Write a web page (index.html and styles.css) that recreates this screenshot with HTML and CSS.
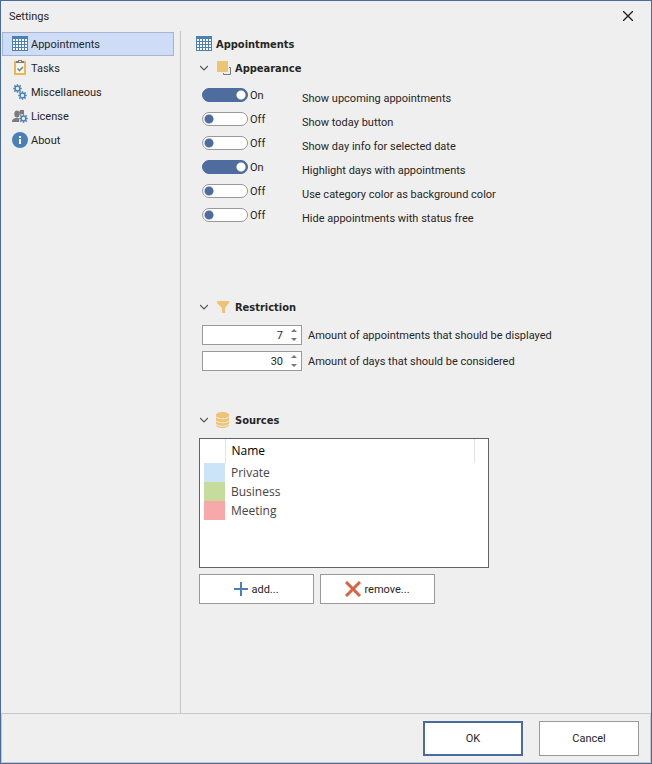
FILE: index.html
```html
<!DOCTYPE html>
<html lang="en">
<head>
<meta charset="utf-8">
<title>Settings</title>
<link rel="stylesheet" href="styles.css">
</head>
<body>
<svg class="defs" aria-hidden="true">
  <symbol id="calendar" viewBox="0 0 16 16">
    <path fill="#4a80b8" d="M0 0h16v15H0z"/>
    <path fill="#fff" d="M1 3h2v2H1zM4 3h2v2H4zM7 3h2v2H7zM10 3h2v2h-2zM13 3h2v2h-2zM1 6h2v2H1zM4 6h2v2H4zM7 6h2v2H7zM10 6h2v2h-2zM13 6h2v2h-2zM1 9h2v2H1zM4 9h2v2H4zM7 9h2v2H7zM10 9h2v2h-2zM13 9h2v2h-2zM1 12h2v2H1zM4 12h2v2H4zM7 12h2v2H7zM10 12h2v2h-2zM13 12h2v2h-2z"/>
  </symbol>
  <symbol id="gear" viewBox="0 0 10 10">
    <circle cx="5" cy="5" r="2.6" fill="none" stroke="#4a80b8" stroke-width="1.5"/>
    <path stroke="#4a80b8" stroke-width="1.7" d="M5 .3v2M5 7.700v2M.3 5h2M7.700 5h2M1.500 1.500l1.500 1.500M7 7l1.500 1.500M1.500 8.500L3 7M7 3l1.500-1.500"/>
  </symbol>
  <symbol id="chevron" viewBox="0 0 8 8">
    <path fill="none" stroke="#555" stroke-width="1.2" d="M0 2l4 4 4-4"/>
  </symbol>
</svg>
<div class="window">
  <header class="titlebar">
    <h1>Settings</h1>
    <button class="close" type="button" aria-label="Close"><svg width="10" height="10" viewBox="0 0 10 10"><path stroke="#1c1c1c" stroke-width="1.3" d="M0 0l10 10M10 0L0 10"/></svg></button>
  </header>
  <div class="body">
    <nav class="sidebar">
      <a class="item selected" href="#appointments" aria-current="page"><svg class="icon"><use href="#calendar"/></svg>Appointments</a>
      <a class="item" href="#tasks"><svg class="icon" viewBox="0 0 16 16"><path fill="#f4f4f4" stroke="#edb452" stroke-width="2" d="M3 2h10v12H3z"/><path fill="#efefef" d="M4 0h8v4H4z"/><path fill="#7c7c7c" d="M4 1h2V0h4v1h2v2H4zM7 1v1h2V1z"/><path fill="none" stroke="#5d9c89" stroke-width="1.600" d="M5.500 8.500l2 2L11 7"/></svg>Tasks</a>
      <a class="item" href="#miscellaneous"><svg class="icon"><use href="#gear" x="1" y="0" width="9" height="9"/><use href="#gear" x="6" y="7" width="9" height="9"/></svg>Miscellaneous</a>
      <a class="item" href="#license"><svg class="icon" viewBox="0 0 16 16"><circle cx="9.500" cy="4.500" r="2.500" fill="#9a9a9a"/><ellipse cx="5" cy="6" rx="2.700" ry="3.600" fill="#7c7c7c"/><path fill="#7c7c7c" d="M0 14c0-3 2-4 5-4 1 0 2 0 3 1l-1 3zM8 2h4v4H8z"/><circle cx="11.500" cy="10.500" r="4.500" fill="#efefef"/><use href="#gear" x="7" y="6" width="9" height="9"/></svg>License</a>
      <a class="item" href="#about"><svg class="icon" viewBox="0 0 16 16"><circle cx="8" cy="8" r="8" fill="#4a80b8"/><path fill="#fff" d="M7 4h2v2H7zM7 7h2v5H7z"/></svg>About</a>
    </nav>
    <main class="content">
      <h2><svg class="icon"><use href="#calendar"/></svg>Appointments</h2>

      <section class="appearance">
        <h3><svg class="chevron"><use href="#chevron"/></svg><svg class="icon" viewBox="0 0 16 16"><path fill="#efefef" stroke="#777" d="M7.500 7.500h7v7h-7z"/><path fill="#efefef" d="M0 0h13v13H0z"/><path fill="#eec373" d="M1 1h11v11H1z"/></svg>Appearance</h3>
        <div class="option"><input id="o1" type="checkbox" role="switch" checked><span class="state">On</span><label for="o1">Show upcoming appointments</label></div>
        <div class="option"><input id="o2" type="checkbox" role="switch"><span class="state">Off</span><label for="o2">Show today button</label></div>
        <div class="option"><input id="o3" type="checkbox" role="switch"><span class="state">Off</span><label for="o3">Show day info for selected date</label></div>
        <div class="option"><input id="o4" type="checkbox" role="switch" checked><span class="state">On</span><label for="o4">Highlight days with appointments</label></div>
        <div class="option"><input id="o5" type="checkbox" role="switch"><span class="state">Off</span><label for="o5">Use category color as background color</label></div>
        <div class="option"><input id="o6" type="checkbox" role="switch"><span class="state">Off</span><label for="o6">Hide appointments with status free</label></div>
      </section>

      <section class="restriction">
        <h3><svg class="chevron"><use href="#chevron"/></svg><svg class="icon" viewBox="0 0 16 16"><path fill="#eec373" d="M1 2h12v2L9 9v5H6V9L1 4z"/></svg>Restriction</h3>
        <div class="amount"><span class="spinner"><input id="n1" type="number" value="7"><svg width="6" height="12" viewBox="0 0 6 12"><path fill="#777" d="M0 3l3-3 3 3zM0 9l3 3 3-3z"/></svg></span><label for="n1">Amount of appointments that should be displayed</label></div>
        <div class="amount"><span class="spinner"><input id="n2" type="number" value="30"><svg width="6" height="12" viewBox="0 0 6 12"><path fill="#777" d="M0 3l3-3 3 3zM0 9l3 3 3-3z"/></svg></span><label for="n2">Amount of days that should be considered</label></div>
      </section>

      <section class="sources">
        <h3><svg class="chevron"><use href="#chevron"/></svg><svg class="icon" viewBox="0 0 16 16"><path fill="#eec373" d="M0 3c0-4 13-4 13 0v10c0 4-13 4-13 0z"/><path fill="none" stroke="#efefef" d="M0 4.500c1 3 12 3 13 0M0 8.500c1 3 12 3 13 0M0 12c1 3 12 3 13 0"/></svg>Sources</h3>
        <div class="list">
          <table>
            <thead><tr><th class="key"></th><th>Name</th></tr></thead>
            <tbody>
              <tr><td class="private"></td><td>Private</td></tr>
              <tr><td class="business"></td><td>Business</td></tr>
              <tr><td class="meeting"></td><td>Meeting</td></tr>
            </tbody>
          </table>
        </div>
        <div class="actions">
          <button type="button"><svg width="14" height="14" viewBox="0 0 14 14"><path stroke="#4a80b8" stroke-width="2" d="M7 0v14M0 7h14"/></svg>add...</button>
          <button type="button"><svg width="16" height="16" viewBox="0 0 16 16"><path stroke="#d9623f" stroke-width="3" d="M1 1l14 14M15 1L1 15"/></svg>remove...</button>
        </div>
      </section>
    </main>
  </div>
  <footer class="footer">
    <button class="primary" type="button">OK</button>
    <button type="button">Cancel</button>
  </footer>
</div>
</body>
</html>
```
FILE: styles.css
```css
* { box-sizing: border-box; }

body {
  margin: 0;
  font: 11px/17px Roboto, "Noto Sans", sans-serif;
  color: #262626;
  background: #efefef;
}

h1, h2, h3 { margin: 0; font-size: inherit; }

button, input { font: inherit; color: inherit; }

.defs { position: absolute; width: 0; height: 0; }

.icon { flex: none; width: 16px; height: 16px; }

.window {
  display: flex;
  flex-direction: column;
  min-height: 100vh;
  border: 1px solid #4b6a9e;
}

.titlebar {
  display: flex;
  align-items: center;
  justify-content: space-between;
  height: 30px;
  padding: 0 18px 0 8px;
}

.titlebar h1 { font-weight: normal; }

.close {
  display: flex;
  padding: 0;
  border: 0;
  background: none;
}

.body { display: flex; flex: 1; }

.sidebar {
  flex: none;
  width: 180px;
  padding: 1px 6px 0 1px;
  border-right: 1px solid #c6c6c6;
}

.item {
  display: flex;
  align-items: center;
  gap: 3px;
  height: 24px;
  padding: 0 9px;
  border: 1px solid transparent;
  color: inherit;
  text-decoration: none;
}

.selected { border-color: #a3b4d4; background: #cfdcf5; }

.content {
  flex: 1;
  padding: 1px 18px 16px;
}

h2, h3 {
  display: flex;
  align-items: center;
  height: 24px;
  font: bold 11px/17px "DejaVu Sans Condensed", "Noto Sans", sans-serif;
}

h2 { gap: 4px; margin-left: -3px; }

h3 { gap: 3px; padding-left: 1px; }

.chevron { width: 8px; height: 8px; margin-right: 5px; }

.appearance { min-height: 239px; }

.restriction { min-height: 113px; }

.option {
  display: flex;
  height: 24px;
  padding: 7px 0 0 3px;
}

.option input {
  appearance: none;
  flex: none;
  width: 46px;
  height: 14px;
  margin: 1px 2px 0 0;
  border: 1px solid #999;
  border-radius: 7px;
  background: radial-gradient(circle at 6px 6px, #4e6c9e 4px, transparent 5px) #fff;
}

.option input:checked {
  border-color: #4e6c9e;
  background: radial-gradient(circle at 38px 6px, #fff 4px, transparent 5px) #4e6c9e;
}

.state { width: 52px; }

.option label { padding-top: 3px; }

.amount {
  display: flex;
  align-items: center;
  gap: 6px;
  height: 26px;
  padding-left: 3px;
}

.restriction h3 { margin-bottom: 3px; }

.spinner {
  display: flex;
  align-items: center;
  gap: 8px;
  width: 100px;
  height: 20px;
  padding-right: 4px;
  border: 1px solid #999;
  background: #fff;
}

.spinner input {
  appearance: textfield;
  flex: 1;
  min-width: 0;
  padding: 0;
  border: 0;
  background: none;
  text-align: right;
}

.spinner input::-webkit-inner-spin-button { appearance: none; }

.sources h3 { margin-bottom: 6px; }

.list {
  max-width: 290px;
  min-height: 130px;
  padding: 0 13px 0 4px;
  border: 1px solid #636363;
  background: #fff;
}

table {
  width: 100%;
  border-collapse: collapse;
  font: 12px/18px "Open Sans", "Noto Sans", sans-serif;
}

th {
  height: 24px;
  padding: 0 6px;
  border-right: 1px solid #e2e2e2;
  color: #000;
  font-weight: normal;
  text-align: left;
}

td { height: 19px; padding: 0 6px; color: #444; }

.key { width: 21px; }

.private { background: #cce4f7; }

.business { background: #c6dc9c; }

.meeting { background: #f7a8a8; }

.actions { display: flex; gap: 6px; margin-top: 6px; }

.actions button, .footer button {
  display: flex;
  align-items: center;
  justify-content: center;
  gap: 3px;
  width: 115px;
  height: 30px;
  padding: 0;
  border: 1px solid #999;
  background: #fff;
}

.footer {
  display: flex;
  justify-content: flex-end;
  gap: 16px;
  height: 50px;
  padding: 7px 11px 0;
  border: 1px solid #c8c8c8;
}

.footer button { width: 100px; height: 35px; }

.footer .primary { border: 2px solid #4b6a9e; }
```
